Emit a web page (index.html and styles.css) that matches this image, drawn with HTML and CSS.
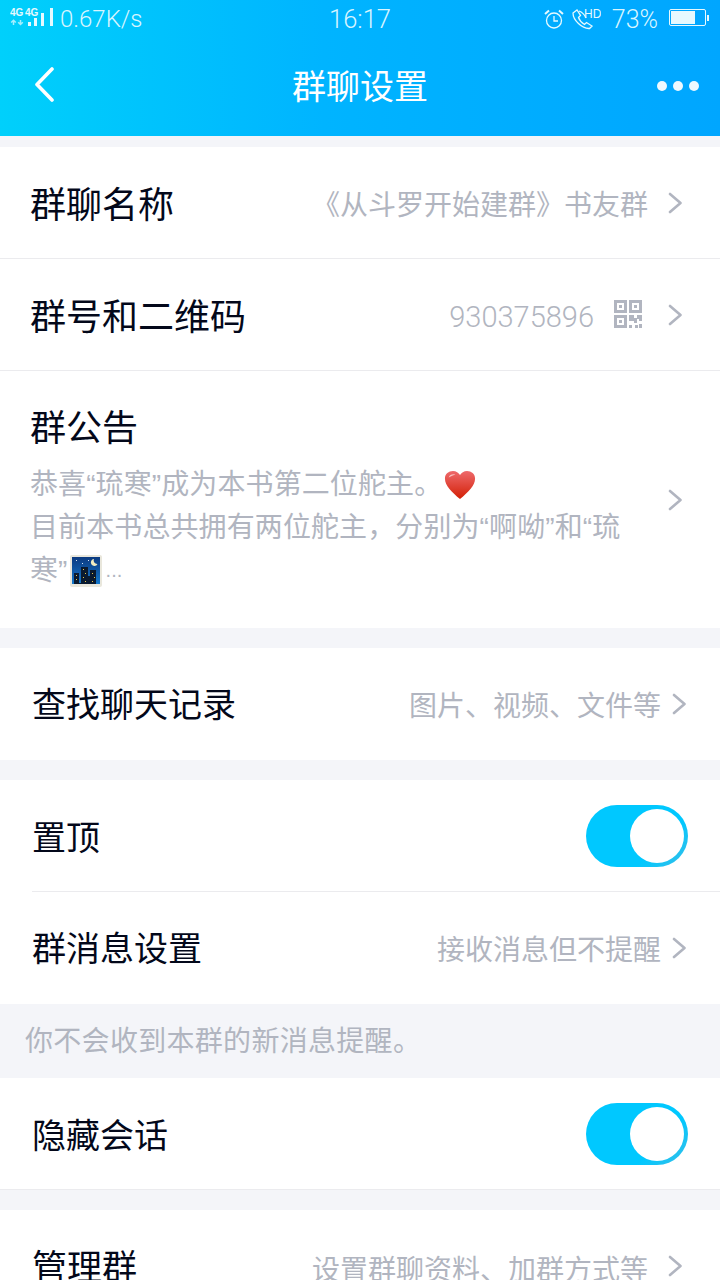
FILE: index.html
```html
<!DOCTYPE html>
<html lang="zh-CN">
<head>
    <meta charset="UTF-8">
    <meta name="viewport" content="width=device-width, initial-scale=1.0">
    <title>群聊设置</title>
    <link rel="stylesheet" href="styles.css">
</head>
<body>
    <div class="screen">
        <!-- 顶部 -->
        <header class="header">
            <div class="status-bar">
                <div class="status-left">
                    <svg class="net-icon" width="43" height="20" viewBox="0 0 43 20">
                        <text x="0" y="8" class="net-text">4G</text>
                        <text x="15" y="8" class="net-text">4G</text>
                        <path d="M3.500 17v-4.500M1.200 14.500l2.300-2.300 2.300 2.300M10.500 12v4.500M8.200 14.200l2.300 2.300 2.300-2.300" fill="none" stroke="#fff" stroke-opacity=".65" stroke-width="1.500"/>
                        <rect x="18" y="14" width="3" height="4" fill="#e6f9ff"/>
                        <rect x="24" y="10" width="3" height="8" fill="#e6f9ff"/>
                        <rect x="31" y="5" width="3" height="13" fill="#e6f9ff"/>
                        <rect x="40" y="0" width="3" height="18" fill="#e6f9ff"/>
                    </svg>
                    <span class="speed">0.67K/s</span>
                </div>
                <div class="status-time">16:17</div>
                <div class="status-right">
                    <svg width="20" height="20" viewBox="0 0 20 20" fill="none" stroke="#e6f9ff" stroke-width="1.300">
                        <circle cx="10" cy="11.500" r="7.500"/>
                        <path d="M10 7V12H14"/>
                        <path d="M1 5 5 1.500M19 5 15 1.500" stroke-width="2"/>
                    </svg>
                    <svg class="call-icon" width="29" height="22" viewBox="0 0 29 22" fill="none" stroke="#e6f9ff" stroke-width="1.300">
                        <path d="M1 5 5 2 8.500 7.500 6.500 9.500C7.500 12.500 10 15 12.500 16.500L14.500 14.500 20 18 17.500 20.500C10 21 1 12 1 5Z"/>
                        <path d="M7 3C10 4 12.500 6.500 14 10"/>
                        <text x="12" y="10" class="hd-text">HD</text>
                    </svg>
                    <span class="battery-text">73%</span>
                    <span class="battery"><i class="battery-fill"></i></span>
                    <i class="battery-cap"></i>
                </div>
            </div>
            <div class="nav-bar">
                <svg class="back" width="22" height="36" viewBox="0 0 22 36" fill="none" stroke="#fff" stroke-width="3.600" stroke-linecap="round" stroke-linejoin="round">
                    <path d="M18 2 3 17.500 18 33"/>
                </svg>
                <div class="nav-title">群聊设置</div>
                <div class="more"><i></i><i></i><i></i></div>
            </div>
        </header>

        <div class="list first">
            <div class="row line">
                <span class="label big">群聊名称</span>
                <span class="value">《从斗罗开始建群》书友群</span>
                <svg class="arrow" width="14" height="22" viewBox="0 0 14 22"><path d="M2 2 12.500 11 2 20"/></svg>
            </div>
            <div class="row line">
                <span class="label big">群号和二维码</span>
                <span class="value number">930375896</span>
                <svg class="qr" width="28" height="28" viewBox="0 0 28 28" fill="#b1b5c0">
                    <path fill-rule="evenodd" d="M0 0h13v13H0zM3 3v7h7V3zM15 0h13v13H15zM18 3v7h7V3zM0 15h13v13H0zM3 18v7h7v-7z"/>
                    <rect x="5" y="5" width="3" height="3"/>
                    <rect x="20" y="5" width="3" height="3"/>
                    <rect x="5" y="20" width="3" height="3"/>
                    <path d="M15 15h5v3h3v-3h5v6h-3v-2h-2v4h-3v-2h-5zM15 25h3v3h-3zM21 25h3v3h-3zM25 24h3v4h-3z"/>
                </svg>
                <svg class="arrow" width="14" height="22" viewBox="0 0 14 22"><path d="M2 2 12.500 11 2 20"/></svg>
            </div>
            <div class="notice">
                <div class="notice-body">
                    <div class="label big">群公告</div>
                    <div class="notice-text">
                        <div>恭喜“琉寒”成为本书第二位舵主。<svg class="emoji heart" width="32" height="32" viewBox="0 0 34 34">
                            <defs><linearGradient id="heart" x1="0" y1="0" x2="0" y2="1"><stop offset="0" stop-color="#ee6a6c"/><stop offset="1" stop-color="#d31f05"/></linearGradient></defs>
                            <path d="M17 32C8 24 1 18 1 10 1 5 5 2 9.500 2 13 2 15.500 4 17 6.500 18.500 4 21 2 24.500 2 29 2 33 5 33 10 33 18 26 24 17 32Z" fill="url(#heart)"/>
                            <path d="M5 9C6 6 9 5 12 6 9 6.500 7 8 5 9Z" fill="#f9c0c0"/>
                        </svg></div>
                        <div>目前本书总共拥有两位舵主，分别为“啊呦”和“琉</div>
                        <div>寒”<svg class="emoji city" width="32" height="32" viewBox="0 0 32 32">
                            <rect width="32" height="32" rx="2" fill="#e9e7dc"/>
                            <defs><linearGradient id="sky" x1="0" y1="0" x2="0" y2="1"><stop offset="0" stop-color="#0c3a80"/><stop offset="1" stop-color="#1478cc"/></linearGradient></defs>
                            <rect x="2" y="2" width="28" height="27" fill="url(#sky)"/>
                            <path d="M24 4a3.500 3.500 0 1 0 3.500 5 3.500 3.500 0 0 1-3.500-5Z" fill="#f2ecc0"/>
                            <path d="M6 5h1v1H6zM12 8h1v1h-1zM18 5h1v1h-1z" fill="#d9e6f5"/>
                            <path d="M4 29V18h5v10h2V12h7v9h2v-6h6v14Z" fill="#0a1a30"/>
                            <path d="M6 20h1v1H6zM6 24h1v1H6zM13 14h1v1h-1zM15 18h1v1h-1zM13 22h1v1h-1zM15 26h1v1h-1zM22 18h1v1h-1zM24 22h1v1h-1zM22 26h1v1h-1z" fill="#e8c84a"/>
                        </svg><span class="dots">...</span></div>
                    </div>
                </div>
                <svg class="arrow" width="14" height="22" viewBox="0 0 14 22"><path d="M2 2 12.500 11 2 20"/></svg>
            </div>
        </div>

        <div class="list gap">
            <div class="row inset-text tall">
                <span class="label">查找聊天记录</span>
                <span class="value">图片、视频、文件等</span>
                <svg class="arrow close" width="14" height="22" viewBox="0 0 14 22"><path d="M2 2 12.500 11 2 20"/></svg>
            </div>
        </div>

        <div class="list gap">
            <div class="indent-line">
                <div class="row inset-text">
                    <span class="label">置顶</span>
                    <span class="toggle"><i></i></span>
                </div>
            </div>
            <div class="row inset-text tall">
                <span class="label">群消息设置</span>
                <span class="value">接收消息但不提醒</span>
                <svg class="arrow close" width="14" height="22" viewBox="0 0 14 22"><path d="M2 2 12.500 11 2 20"/></svg>
            </div>
        </div>

        <div class="tip">你不会收到本群的新消息提醒。</div>

        <div class="list">
            <div class="row inset-text line">
                <span class="label">隐藏会话</span>
                <span class="toggle"><i></i></span>
            </div>
        </div>

        <div class="list gap">
            <div class="row inset-text tall">
                <span class="label manage">管理群</span>
                <span class="value lower">设置群聊资料、加群方式等</span>
                <svg class="arrow" width="14" height="22" viewBox="0 0 14 22"><path d="M2 2 12.500 11 2 20"/></svg>
            </div>
        </div>
    </div>
</body>
</html>
```

FILE: styles.css
```css
/* 基本のスタイル */
html, body {
    margin: 0;
    padding: 0;
    background-color: #f4f5f9;
}

body {
    font-family: "Liberation Sans", "Noto Sans CJK SC", sans-serif;
    color: #03081a;
}

.screen {
    width: 720px;
    height: 1280px;
    overflow: hidden;
}

/* 顶部 */
.header {
    height: 136px;
    background: linear-gradient(90deg, #00d0fb 0%, #00b4ff 45%, #00a6ff 100%);
    color: #fff;
}

.status-bar {
    height: 38px;
    display: flex;
    align-items: center;
    justify-content: space-between;
    position: relative;
    color: #d8f5ff;
    font-family: Roboto, "Liberation Sans", sans-serif;
    font-weight: 300;
    font-size: 25px;
}

.status-left {
    display: flex;
    align-items: center;
    margin-left: 10px;
}

.net-icon {
    margin-top: -2px;
}

.net-text {
    font-family: "Liberation Sans", sans-serif;
    font-size: 10px;
    font-weight: bold;
    fill: #e6f9ff;
}

.speed {
    margin-left: 7px;
    font-size: 24px;
}

.status-time {
    position: absolute;
    left: 0;
    right: 0;
    text-align: center;
    font-size: 25.500px;
}

.status-right {
    display: flex;
    align-items: center;
    margin-right: 11px;
}

.call-icon {
    margin-left: 8px;
}

.hd-text {
    font-family: "Liberation Sans", sans-serif;
    font-size: 12px;
    fill: #e6f9ff;
    stroke: none;
}

.battery-text {
    margin-left: 11px;
}

.battery {
    display: block;
    width: 33px;
    height: 13px;
    margin-left: 11px;
    margin-top: -3px;
    padding: 1px;
    border: 1px solid #e6f9ff;
    border-radius: 2px;
}

.battery-fill {
    display: block;
    width: 24px;
    height: 13px;
    background-color: #e6f9ff;
}

.battery-cap {
    display: block;
    width: 2px;
    height: 6px;
    margin-left: 1px;
    margin-top: -3px;
    background-color: #e6f9ff;
}

.nav-bar {
    height: 98px;
    display: flex;
    align-items: center;
    justify-content: space-between;
    position: relative;
    padding: 0 21px 0 34px;
}

.back {
    margin-bottom: 4px;
}

.nav-title {
    position: absolute;
    left: 0;
    right: 0;
    text-align: center;
    font-size: 34px;
    line-height: 98px;
}

.more {
    display: flex;
    gap: 6px;
    margin-bottom: 2px;
}

.more i {
    display: block;
    width: 10px;
    height: 10px;
    border-radius: 50%;
    background-color: #eef9ff;
}

/* リスト */
.list {
    background-color: #fff;
}

.first {
    margin-top: 11px;
}

.gap {
    margin-top: 20px;
}

.row {
    height: 111px;
    display: flex;
    align-items: center;
    padding: 0 38px 0 30px;
}

.line {
    border-bottom: 1px solid #ebebee;
}

.inset-text {
    padding-left: 32px;
}

.tall {
    height: 112px;
    padding-right: 34px;
}

.tall .label {
    margin-bottom: 3px;
}

.tall .lower + .arrow {
    margin-right: 4px;
}

.indent-line {
    margin-left: 32px;
    border-bottom: 1px solid #ebebee;
}

.indent-line .row {
    padding-left: 0;
}

.label {
    font-size: 34px;
    flex: 1;
}

.big {
    font-size: 36px;
    margin-bottom: 2px;
}

.tall .manage {
    font-size: 35px;
}

.value {
    font-size: 28px;
    color: #b1b5c0;
}

.number {
    font-family: Roboto, "Liberation Sans", sans-serif;
    font-weight: 300;
    font-size: 29px;
    margin-top: 4px;
}

.lower {
    margin-top: 4px;
}

.arrow {
    margin-left: 20px;
    flex: none;
}

.close {
    margin-left: 11px;
}

.arrow path {
    fill: none;
    stroke: #b1b5c0;
    stroke-width: 2.600;
    stroke-linecap: round;
    stroke-linejoin: round;
}

.qr {
    margin-left: 20px;
    margin-right: 6px;
    margin-bottom: 2px;
    flex: none;
}

/* 群公告 */
.notice {
    height: 257px;
    display: flex;
    align-items: center;
    padding: 0 38px 0 30px;
}

.notice-body {
    flex: 1;
    align-self: flex-start;
    padding-top: 28px;
}

.notice-text {
    margin-top: 12px;
    font-size: 28px;
    line-height: 43px;
    letter-spacing: 0.1px;
    color: #b1b5c0;
    white-space: nowrap;
}

.notice-text div {
    height: 43px;
    display: flex;
    align-items: center;
}

.emoji {
    flex: none;
}

.heart {
    margin-left: 2px;
}

.city {
    margin-left: 2px;
}

.dots {
    margin-left: 4px;
    font-size: 20px;
}

/* スイッチ */
.toggle {
    display: block;
    width: 102px;
    height: 62px;
    margin-right: -6px;
    border-radius: 31px;
    background: linear-gradient(135deg, #00c8ff 68%, #3abde6);
    position: relative;
}

.toggle i {
    position: absolute;
    top: 4px;
    right: 4px;
    width: 54px;
    height: 54px;
    border-radius: 50%;
    background-color: #fff;
}

.tip {
    height: 74px;
    line-height: 75px;
    padding-left: 25px;
    font-size: 28px;
    letter-spacing: 0.3px;
    color: #b1b5c0;
}
```
